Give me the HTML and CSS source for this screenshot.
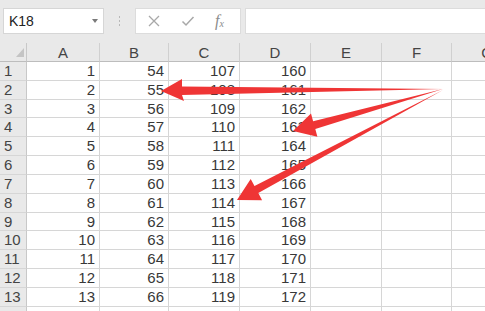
FILE: index.html
```html
<!DOCTYPE html>
<html>
<head>
<meta charset="utf-8">
<link rel="stylesheet" href="styles.css">
</head>
<body>
<div class="app">
  <div class="toolbar">
    <div class="namebox"><span class="ref">K18</span><span class="caret"></span></div>
    <div class="grip"><i></i><i></i><i></i></div>
    <div class="btns">
      <svg class="ico" width="14" height="14" viewBox="0 0 14 14"><path d="M2 2 L12 12 M12 2 L2 12" stroke="#a8a8a8" stroke-width="1.3" fill="none"/></svg>
      <svg class="ico" width="14" height="14" viewBox="0 0 14 14"><path d="M1.5 7.5 L5 11 L12.5 3" stroke="#a8a8a8" stroke-width="1.5" fill="none"/></svg>
      <span class="fx">f<sub>x</sub></span>
    </div>
    <div class="formula"></div>
  </div>
  <div class="sheet" id="sheet">
    <div class="hd corner"><span class="tri"></span></div>
    <div class="hd col">A</div><div class="hd col">B</div><div class="hd col">C</div><div class="hd col">D</div><div class="hd col">E</div><div class="hd col">F</div><div class="hd col">G</div>
  </div>
  <svg class="annot" width="485" height="311" viewBox="0 0 485 311">
    <polygon fill="#ef3535" points="161,91 182,79 182,86.5 443,89 182,95 184,101"/>
    <polygon fill="#ef3535" points="293,131 311,113.5 313.1,121.2 443,89 315.3,129 317.4,136.7"/>
    <polygon fill="#ef3535" points="237,200 250.7,179 254.5,186.1 443,90 258.3,193.1 262.1,200.2"/>
  </svg>
</div>
<script src="app.js"></script>
</body>
</html>
```
FILE: app.js
```js
var sheet = document.getElementById('sheet');
for (var r = 1; r <= 14; r++) {
  var vals = r <= 13 ? [r, r + 53, r + 106, r + 159, '', '', ''] : ['', '', '', '', '', '', ''];
  var h = document.createElement('div');
  h.className = 'hd row';
  h.textContent = r <= 13 ? r : '';
  sheet.appendChild(h);
  for (var c = 0; c < vals.length; c++) {
    var d = document.createElement('div');
    d.className = 'cell';
    d.textContent = vals[c];
    sheet.appendChild(d);
  }
}
```
FILE: styles.css
```css
html, body { margin: 0; padding: 0; }
body {
  width: 485px;
  height: 311px;
  overflow: hidden;
  background: #fff;
  font-family: "Liberation Sans", Arial, sans-serif;
}
.app { position: relative; width: 485px; height: 311px; overflow: hidden; }

.toolbar {
  height: 43px;
  background: #e9e9e9;
  display: flex;
  align-items: flex-start;
  padding-top: 8px;
  box-sizing: border-box;
}
.namebox {
  margin-left: 3px;
  width: 101px;
  height: 26px;
  background: #fff;
  border: 1px solid #d6d6d6;
  box-sizing: border-box;
  display: flex;
  align-items: center;
  justify-content: space-between;
  padding: 0 5px 0 5px;
}
.ref { font-size: 14px; color: #222; }
.caret {
  width: 0; height: 0;
  border-left: 3.5px solid transparent;
  border-right: 3.5px solid transparent;
  border-top: 4px solid #7a7a7a;
}
.grip {
  width: 31px;
  height: 26px;
  display: flex;
  flex-direction: column;
  align-items: center;
  justify-content: center;
  gap: 2px;
}
.grip i { display: block; width: 1px; height: 2px; background: #b8b8b8; }
.btns {
  width: 106px;
  height: 26px;
  background: #fff;
  border: 1px solid #dcdcdc;
  box-sizing: border-box;
  display: flex;
  align-items: center;
  padding-left: 11px;
  gap: 20px;
}
.fx {
  font-family: "Liberation Serif", serif;
  font-style: italic;
  font-size: 16px;
  color: #8c8c8c;
}
.fx sub { font-size: 10px; vertical-align: -1px; }
.formula {
  margin-left: 4px;
  flex: 1;
  height: 26px;
  background: #fff;
  border: 1px solid #dcdcdc;
  border-right: none;
  box-sizing: border-box;
}

.sheet {
  display: grid;
  grid-template-columns: 27px 73px 69px 71px 71px 71px 70px 71px;
  grid-auto-rows: 18.83px;
  grid-template-rows: 19px;
}
.hd {
  background: #e9e9e9;
  color: #444;
  font-size: 15px;
  box-sizing: border-box;
  overflow: hidden;
}
.corner {
  position: relative;
  border-right: 1px solid #c8c8c8;
  border-bottom: 1px solid #bdbdbd;
}
.tri {
  position: absolute;
  right: 2px;
  bottom: 4px;
  width: 0; height: 0;
  border-left: 8px solid transparent;
  border-bottom: 9px solid #c4c4c4;
}
.col {
  text-align: center;
  line-height: 19px;
  border-right: 1px solid #d0d0d0;
  border-bottom: 1px solid #bdbdbd;
}
.row {
  padding-left: 4px;
  line-height: 18px;
  border-right: 1px solid #c8c8c8;
  border-bottom: 1px solid #d6d6d6;
}
.cell {
  box-sizing: border-box;
  border-right: 1px solid #d6d6d6;
  border-bottom: 1px solid #d6d6d6;
  text-align: right;
  padding-right: 4px;
  font-size: 15px;
  line-height: 18px;
  color: #383838;
  overflow: hidden;
  white-space: nowrap;
}
.annot { position: absolute; left: 0; top: 0; pointer-events: none; }
```
